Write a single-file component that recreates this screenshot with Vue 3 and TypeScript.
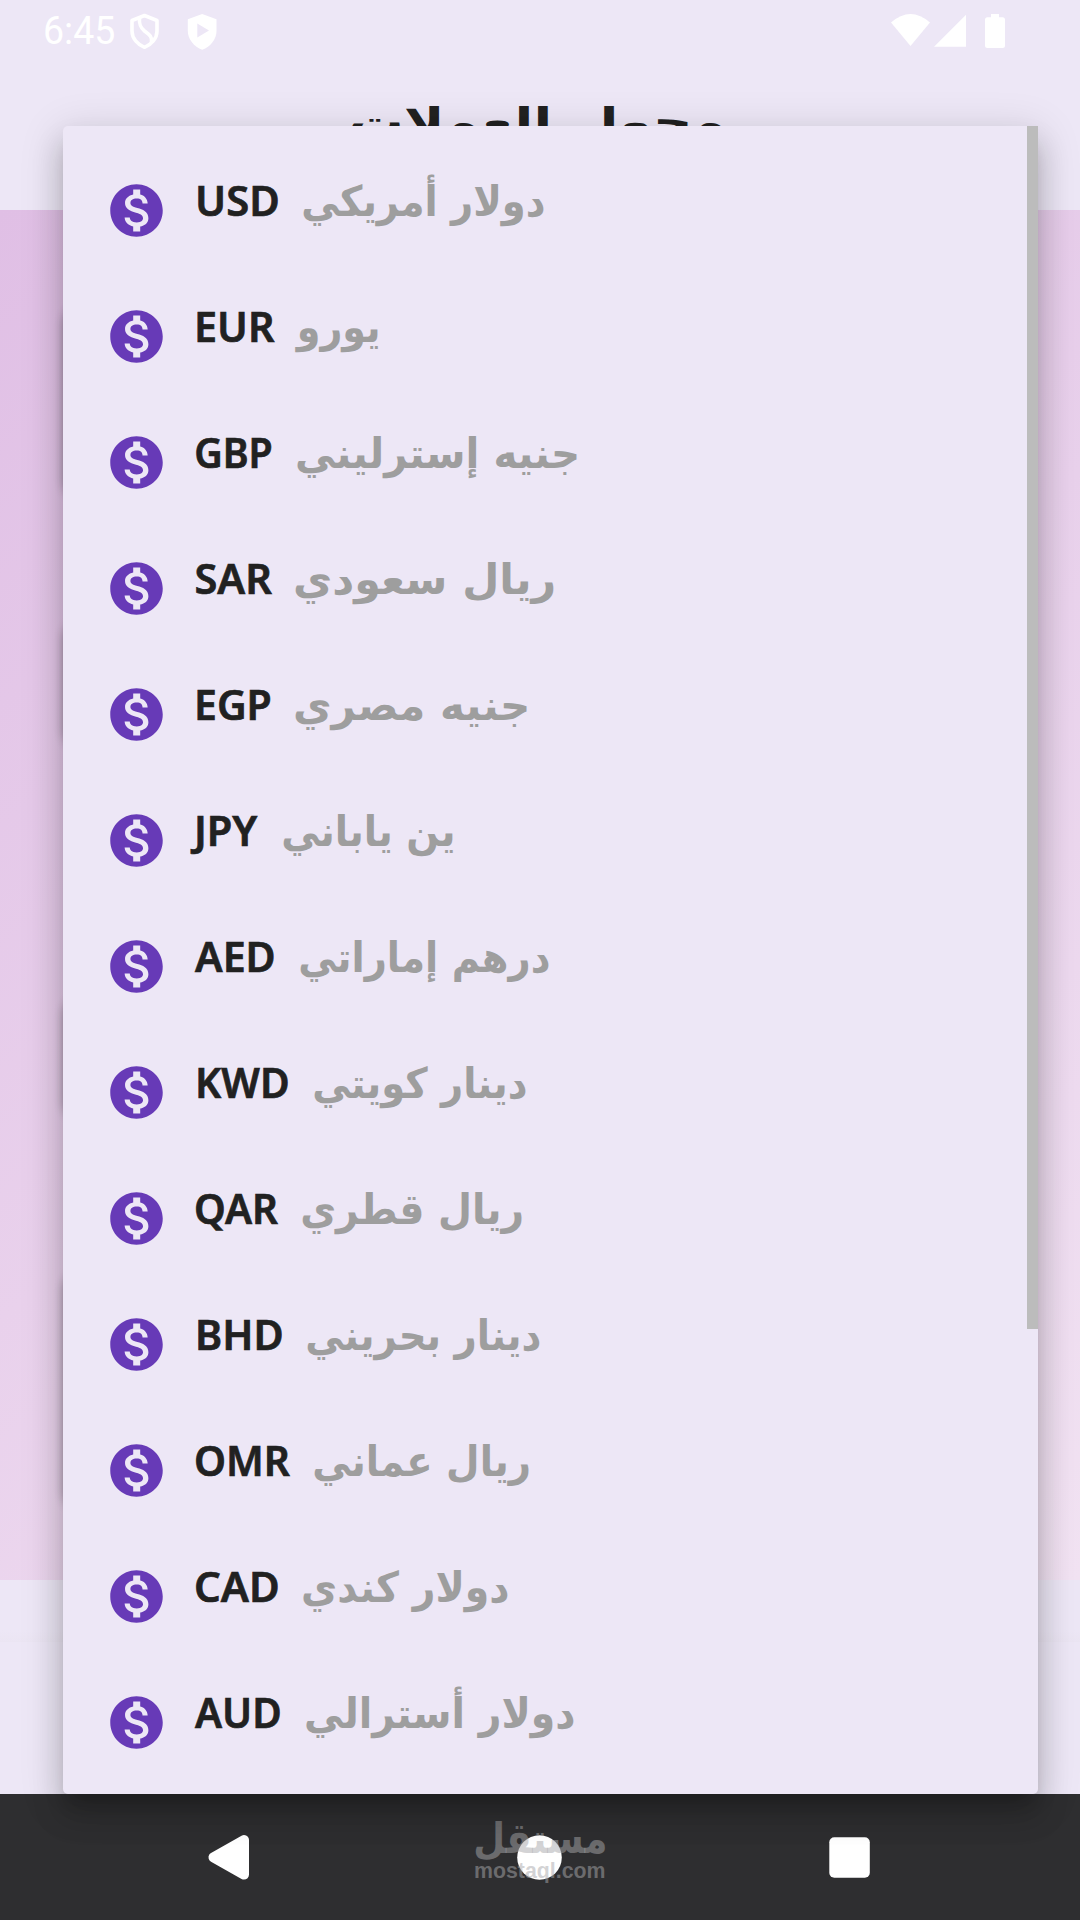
<script setup lang="ts">
interface Currency {
  code: string
  name: string
  /** ink edges of the code and of the name, measured from the label's left side */
  codeSpan: [number, number]
  nameSpan: [number, number]
}

const CODE_FONT = '600 42px "Noto Sans"'
const NAME_FONT = 'bold 42px "DejaVu Sans"'
const TITLE_FONT = 'bold 52px "DejaVu Sans"'
const BRAND_FONT = 'bold 42px "DejaVu Sans"'
const SITE_FONT = 'bold 22px "Liberation Sans"'
const CLOCK_FONT = '38px Roboto'

const currencies: Currency[] = [
  { code: 'USD', name: 'دولار أمريكي', codeSpan: [30, 110], nameSpan: [135, 377] },
  { code: 'EUR', name: 'يورو', codeSpan: [29, 106.5], nameSpan: [127, 210] },
  { code: 'GBP', name: 'جنيه إسترليني', codeSpan: [28, 103], nameSpan: [129, 409] },
  { code: 'SAR', name: 'ريال سعودي', codeSpan: [28.5, 104], nameSpan: [127, 386] },
  { code: 'EGP', name: 'جنيه مصري', codeSpan: [29, 102], nameSpan: [127, 359] },
  { code: 'JPY', name: 'ين ياباني', codeSpan: [22, 90], nameSpan: [115, 285] },
  { code: 'AED', name: 'درهم إماراتي', codeSpan: [27, 106], nameSpan: [132, 382] },
  { code: 'KWD', name: 'دينار كويتي', codeSpan: [30, 120], nameSpan: [146, 359] },
  { code: 'QAR', name: 'ريال قطري', codeSpan: [28, 110], nameSpan: [134, 354] },
  { code: 'BHD', name: 'دينار بحريني', codeSpan: [30, 114], nameSpan: [139, 373] },
  { code: 'OMR', name: 'ريال عماني', codeSpan: [28, 122], nameSpan: [146, 361] },
  { code: 'CAD', name: 'دولار كندي', codeSpan: [28, 110], nameSpan: [135, 341] },
  { code: 'AUD', name: 'دولار أسترالي', codeSpan: [27, 112], nameSpan: [138, 407] },
]

const ctx = document.createElement('canvas').getContext('2d')!

/** Transform that makes the ink of a text run exactly from span[0] to span[1]. */
function fit(text: string, font: string, span: [number, number], y: number, scaleY = 1): string {
  ctx.font = font
  ctx.direction = 'ltr'
  ctx.textAlign = 'left'
  const m = ctx.measureText(text)
  const left = -m.actualBoundingBoxLeft
  const scale = (span[1] - span[0]) / (m.actualBoundingBoxRight - left)
  return `translate(${span[0] - left * scale} ${y}) scale(${scale} ${scaleY})`
}
</script>

<template>
  <div class="screen">
    <header class="top">
      <div class="status">
        <svg class="status-left" width="240" height="60" viewBox="0 0 240 60">
          <text class="clock" :transform="fit('6:45', CLOCK_FONT, [45, 114], 44)">6:45</text>
          <path d="M144.500 15.500L157 20.500V31C157 38.500 151.500 44.500 144.500 47.300C137.500 44.500 132 38.500 132 31V20.500Z" fill="none" stroke="#fff" stroke-width="3.600" stroke-linejoin="round" />
          <path d="M139.500 17.500C139 24 140 27.500 144.500 31C150 35 152.500 37 151.500 42.500" fill="none" stroke="#fff" stroke-width="3.600" />
          <path d="M202.200 14L216.500 19.300V31C216.500 39.500 210.500 46.500 202.200 49.800C194 46.500 187.800 39.500 187.800 31V19.300Z" fill="#fff" />
          <path d="M197.300 23.500V37.500L209 30.500Z" fill="#ede7f6" />
        </svg>
        <svg class="status-right" width="220" height="60" viewBox="860 0 220 60">
          <path d="M891 22.500Q910.500 5.500 930 22.500L910.500 46Z" fill="#fff" />
          <path d="M934 46.800L966 14.800V46.800Z" fill="#fff" />
          <path d="M991 14H999V17.300H1002.500Q1005 17.300 1005 19.800V45.500Q1005 48 1002.500 48H987.500Q985 48 985 45.500V19.800Q985 17.300 987.500 17.300H991Z" fill="#fff" />
        </svg>
      </div>
      <svg class="title" width="1080" height="150" viewBox="0 60 1080 150">
        <text :transform="fit('محول العملات', TITLE_FONT, [352, 723], 135, 0.74)">محول العملات</text>
      </svg>
    </header>

    <main class="body">
      <div class="card amount"></div>
      <div class="card source"></div>
      <div class="card target"></div>
      <div class="card result"></div>
    </main>
    <footer class="tabs"></footer>

    <nav class="system">
      <svg width="1080" height="126" viewBox="0 1794 1080 126">
        <path d="M213.500 1857.300L244 1840V1874.600Z" fill="#fff" stroke="#fff" stroke-width="10" stroke-linejoin="round" />
        <circle cx="539.500" cy="1857.500" r="22.300" fill="#fff" />
        <rect x="829.300" y="1837.300" width="40.500" height="40.500" rx="5" fill="#fff" />
        <text class="brand" :transform="fit('مستقل', BRAND_FONT, [475, 605], 1853)">مستقل</text>
        <text class="site" :transform="fit('mostaql.com', SITE_FONT, [475, 605], 1877.5)">mostaql.com</text>
      </svg>
    </nav>

    <section class="menu">
      <ul class="list">
        <li v-for="c in currencies" :key="c.code" class="row">
          <svg class="coin" width="63" height="63" viewBox="0 0 24 24">
            <path d="M12 2C6.480 2 2 6.480 2 12s4.480 10 10 10 10-4.480 10-10S17.520 2 12 2zm1.410 16.090V20h-2.670v-1.930c-1.710-.36-3.160-1.460-3.270-3.400h1.960c.1 1.050.82 1.870 2.650 1.870 1.960 0 2.400-.98 2.400-1.590 0-.83-.44-1.610-2.670-2.140-2.480-.6-4.180-1.620-4.180-3.670 0-1.720 1.390-2.840 3.110-3.210V4h2.670v1.950c1.860.45 2.790 1.860 2.850 3.390H14.300c-.05-1.110-.64-1.870-2.220-1.870-1.500 0-2.400.68-2.400 1.640 0 .84.65 1.390 2.670 1.910s4.180 1.390 4.180 3.910c-.01 1.830-1.380 2.830-3.120 3.160z" fill="#673ab7" />
          </svg>
          <svg class="label" width="800" height="126" viewBox="0 0 800 126">
            <text class="code" :transform="fit(c.code, CODE_FONT, c.codeSpan, 68.5)">{{ c.code }}</text>
            <text class="name" :transform="fit(c.name, NAME_FONT, c.nameSpan, 69)">{{ c.name }}</text>
          </svg>
        </li>
      </ul>
      <div class="scrollbar"></div>
    </section>
  </div>
</template>

<style>
body {
  margin: 0;
}
</style>

<style scoped>
.screen {
  position: relative;
  display: flex;
  flex-direction: column;
  width: 1080px;
  height: 1920px;
  overflow: hidden;
  background: #ede7f6;
}
.top {
  height: 210px;
}
.status {
  display: flex;
  justify-content: space-between;
  height: 60px;
}
.title {
  display: block;
}
.title text {
  font: bold 52px "DejaVu Sans", sans-serif;
  fill: #212121;
}
.clock {
  font: 38px Roboto, sans-serif;
  fill: #fff;
}
.body {
  display: flex;
  flex-direction: column;
  box-sizing: border-box;
  height: 1370px;
  padding: 90px 63px 0;
  background: linear-gradient(141.8deg, #e0bfe5, #f2e3f3);
}
.card {
  flex: none;
  border-radius: 20px;
  background: #fff;
  box-shadow: 0 5px 10px rgba(0, 0, 0, 0.3);
}
.amount {
  height: 195px;
}
.source {
  height: 130px;
  margin-top: 120px;
}
.target {
  height: 125px;
  margin-top: 246px;
}
.result {
  height: 240px;
  margin-top: 150px;
}
.tabs {
  box-sizing: border-box;
  height: 214px;
  background: linear-gradient(#ede7f6, #ede7f6 50px, #ebe5f3 62px, #ede7f6 62px);
}
.system {
  height: 126px;
  background: #2e2e30;
}
.system svg {
  display: block;
}
.brand {
  font: bold 42px "DejaVu Sans", sans-serif;
  fill: rgba(168, 168, 171, 0.5);
}
.site {
  font: bold 22px "Liberation Sans", sans-serif;
  fill: rgba(168, 168, 171, 0.5);
}
.menu {
  position: absolute;
  top: 126px;
  left: 63px;
  display: flex;
  width: 975px;
  height: 1668px;
  border-radius: 5px;
  background: #ede7f6;
  box-shadow:
    0 13px 15px -8px rgba(0, 0, 0, 0.2),
    0 21px 30px 3px rgba(0, 0, 0, 0.14),
    0 8px 42px 5px rgba(0, 0, 0, 0.12);
}
.list {
  flex: 1;
  margin: 0;
  padding: 21px 0 0 42px;
  list-style: none;
}
.row {
  display: flex;
  align-items: center;
  height: 126px;
}
.coin,
.label {
  flex: none;
}
.code {
  font: 600 42px "Noto Sans", sans-serif;
  fill: #212121;
  stroke: #212121;
  stroke-width: 0.7px;
}
.name {
  font: bold 42px "DejaVu Sans", sans-serif;
  fill: #9e9e9e;
}
.scrollbar {
  flex: none;
  width: 11px;
  height: 1203px;
  background: #bcbcbc;
}
</style>
